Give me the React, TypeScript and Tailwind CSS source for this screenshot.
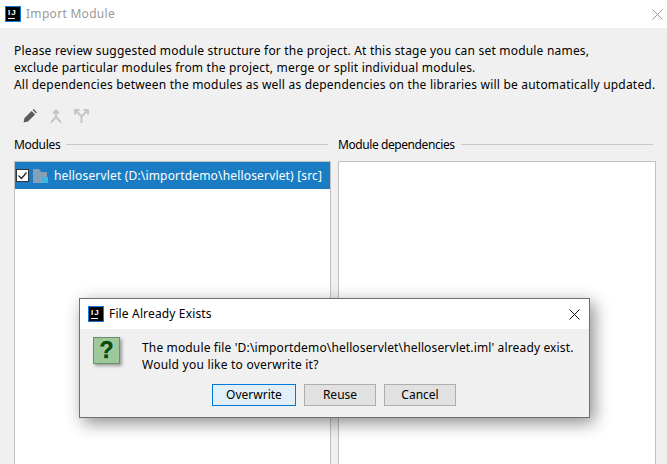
const font = "font-['Noto_Sans',sans-serif]"

const IjLogo = () => (
  <div className="flex h-4 w-4 shrink-0 flex-col border border-[#0f7be0] bg-black px-[2px] pt-[2px]">
    <span className="font-['Liberation_Sans',sans-serif] text-[8px] leading-[7px] font-bold tracking-[1px] text-white">IJ</span>
    <span className="mt-[2px] h-px w-[7px] bg-white" />
  </div>
)

const Toolbar = () => (
  <div className="mt-[11px] ml-[9px] flex h-[24px] items-center gap-[12px]">
    <svg width="14" height="14" viewBox="0 0 14 14">
      <path d="M0.5 13.5L1.5 9L8.6 1.9L12.1 5.4L5 12.5ZM9.6 .9L10.6 0L14 3.4L13.1 4.4Z" fill="#5c5c5c" />
    </svg>
    <svg width="14" height="14" viewBox="0 0 14 14" fill="none" stroke="#c6c6c6" strokeWidth="2">
      <path d="M7 2v6.5M4 4.5L7 1.5l3 3M7 8l-5 5.5M7 8l5 5.5" />
    </svg>
    <svg className="-ml-[1px]" width="15" height="14" viewBox="0 0 15 14" fill="none" stroke="#c6c6c6" strokeWidth="2">
      <path d="M7.5 14V7.5M7.5 7.5L2 2M7.5 7.5L13 2M1 5.5V1h4.5M9.5 1H14v4.5" />
    </svg>
  </div>
)

const SectionLabel = ({ label, tracking }: { label: string; tracking: string }) => (
  <div className="flex items-center gap-[6px] pr-[3px] text-[12px] leading-[17px] text-black">
    <span className={tracking}>{label}</span>
    <div className="h-px flex-1 bg-[#c8c8c8]" />
  </div>
)

const Btn = ({ label, width, primary }: { label: string; width: string; primary?: boolean }) => (
  <button
    className={`${width} h-[22px] border text-[12px] leading-[20px] text-black ${
      primary ? "border-[#0078d7] bg-[#e1eff9]" : "border-[#adadad] bg-[#e1e1e1]"
    }`}
  >
    {label}
  </button>
)

const Dialog = () => (
  <div className="absolute top-[298px] left-[79px] flex h-[120px] w-[511px] flex-col border border-[#707070] bg-[#f0f0f0] shadow-[4px_5px_16px_rgba(0,0,0,0.45)]">
    <div className="flex h-[30px] items-center bg-white pr-[9px] pl-[8px]">
      <IjLogo />
      <span className="ml-[5px] flex-1 text-[12px] tracking-[0.15px] text-black">File Already Exists</span>
      <svg width="11" height="11" viewBox="0 0 11 11" stroke="#111" strokeWidth="1">
        <path d="M.5.5l10 10M10.5.5l-10 10" />
      </svg>
    </div>
    <div className="flex flex-1 flex-col pr-[14px]">
      <div className="flex">
        <div className="mt-[8px] ml-[13px] flex h-[27px] w-[27px] items-center justify-center border border-[#6a8f6a] bg-[#9cc89a] font-['Liberation_Sans',sans-serif] text-[23px] leading-none font-bold text-[#0a4a0a] shadow-[2px_2px_3px_rgba(0,0,0,0.35)] [-webkit-text-stroke:0.6px_#0a4a0a] [text-shadow:0_0_2px_#eaffea]">
          ?
        </div>
        <div className="mt-[10px] ml-[22px] text-[12px] leading-[17px] text-black">
          <p className="tracking-[0.145px]">The module file 'D:\importdemo\helloservlet\helloservlet.iml' already exist.</p>
          <p className="tracking-[0.23px]">Would you like to overwrite it?</p>
        </div>
      </div>
      <div className="mt-[11px] ml-[132px] flex gap-[8px]">
        <Btn label="Overwrite" width="w-[84px]" primary />
        <Btn label="Reuse" width="w-[72px]" />
        <Btn label="Cancel" width="w-[72px]" />
      </div>
    </div>
  </div>
)

export default function App() {
  return (
    <div className={`${font} relative flex h-[464px] w-[667px] flex-col overflow-hidden bg-[#f0f0f0]`}>
      <div className="flex h-[28px] shrink-0 items-center bg-white pr-[4px] pl-[5px]">
        <IjLogo />
        <span className="ml-[5px] flex-1 text-[12px] tracking-[0.3px] text-[#999]">Import Module</span>
        <svg width="11" height="11" viewBox="0 0 11 11" stroke="#999" strokeWidth="1">
          <path d="M.5.5l10 10M10.5.5l-10 10" />
        </svg>
      </div>

      <div className="flex flex-1 flex-col pt-[14px] pr-[11px] pl-[14px]">
        <div className="text-[12px] leading-[17px] tracking-[0.2px] text-black">
          <p>Please review suggested module structure for the project. At this stage you can set module names,</p>
          <p>exclude particular modules from the project, merge or split individual modules.</p>
          <p>All dependencies between the modules as well as dependencies on the libraries will be automatically updated.</p>
        </div>

        <Toolbar />

        <div className="mt-[8px] flex flex-1 gap-[7px]">
          <div className="flex w-[317px] flex-col gap-[8px]">
            <SectionLabel label="Modules" tracking="tracking-[-0.3px]" />
            <div className="flex-1 border border-b-0 border-[#c0c0c0] bg-white">
              <div className="flex h-[27px] items-center bg-[#1a7dc4] pl-[1px] text-[12px] text-white">
                <span className="flex h-[13px] w-[13px] items-center justify-center border border-[#333] bg-white">
                  <svg width="11" height="11" viewBox="0 0 11 11" fill="none" stroke="#222" strokeWidth="1.2">
                    <path d="M1.5 5.5l3 3 5-6" />
                  </svg>
                </span>
                <svg className="ml-[4px]" width="15" height="14" viewBox="0 0 15 14">
                  <path d="M0 0h6l2 3h6v11H0z" fill="#87a0b5" />
                  <path d="M9 8h6v6H9z" fill="#40b6e0" />
                </svg>
                <span className="ml-[6px] tracking-[0.17px]">helloservlet (D:\importdemo\helloservlet) [src]</span>
              </div>
            </div>
          </div>
          <div className="flex flex-1 flex-col gap-[8px]">
            <SectionLabel label="Module dependencies" tracking="tracking-[-0.42px]" />
            <div className="flex-1 border border-b-0 border-[#c0c0c0] bg-white" />
          </div>
        </div>
      </div>

      <Dialog />
    </div>
  )
}
